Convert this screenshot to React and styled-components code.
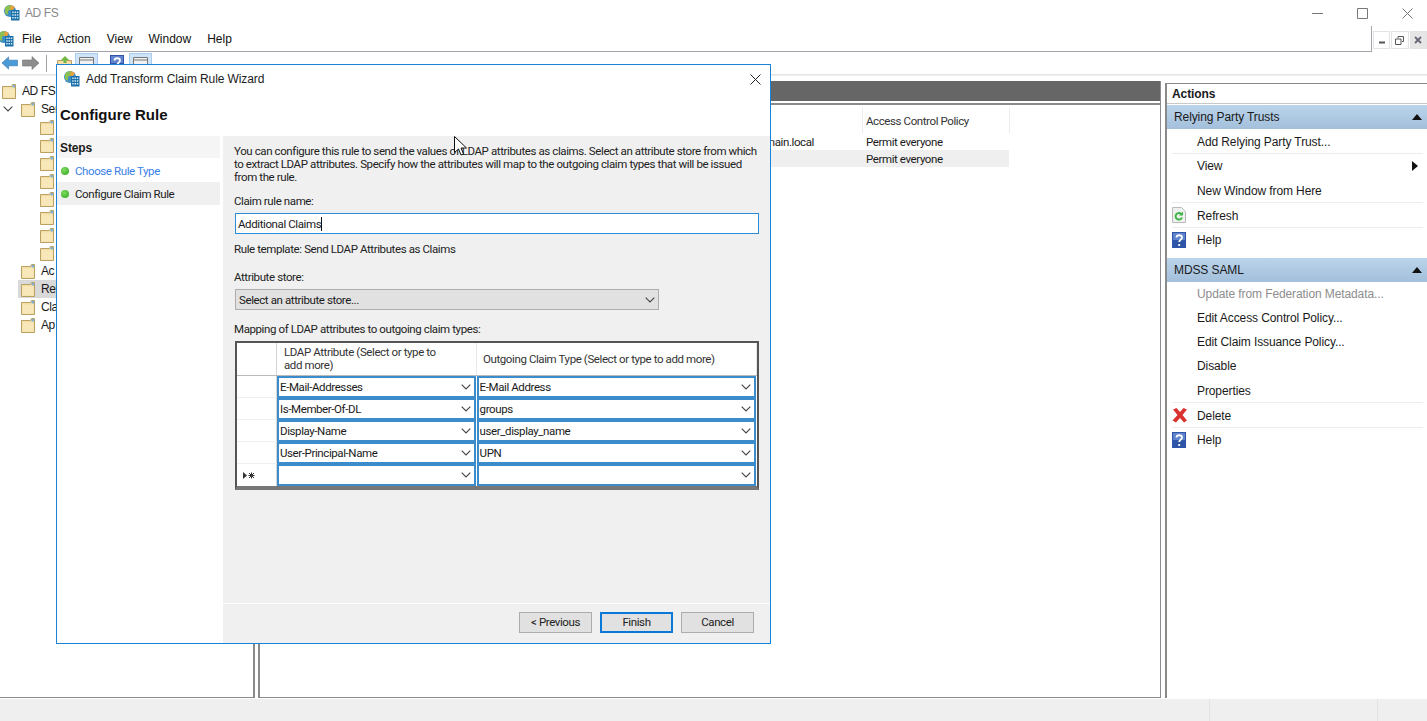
import React from "react";
import styled, { createGlobalStyle } from "styled-components";

const Global = createGlobalStyle`
  html, body { margin: 0; padding: 0; background: #fff; }
  body { font-family: "Liberation Sans", Arial, sans-serif; font-size: 12px; color: #1a1a1a; overflow: hidden; }
  * { box-sizing: border-box; }
`;

const Page = styled.div`
  position: relative;
  width: 1427px;
  height: 721px;
  display: flex;
  flex-direction: column;
  overflow: hidden;
  background: #fff;
`;

const TitleBar = styled.div`
  height: 26px;
  display: flex;
  align-items: center;
  padding-left: 4px;
  gap: 5px;
  color: #8a8a8a;
`;
const TitleText = styled.span`
  flex: 1;
  letter-spacing: -0.4px;
`;
const WinControls = styled.div`
  display: flex;
  align-items: center;
  gap: 28px;
  padding-right: 14px;
`;

const MenuRow = styled.div`
  height: 26px;
  display: flex;
`;
const MenuBar = styled.div`
  flex: 1;
  display: flex;
  align-items: center;
  gap: 16px;
  border-bottom: 1px solid #a5a5ad;
  border-right: 1px solid #a5a5ad;
  font-size: 12px;
  color: #111;
`;
const MenuIcon = styled.span`
  display: flex;
  margin-left: -2px;
  margin-right: -8px;
`;
const MdiButtons = styled.div`
  width: 55px;
  display: flex;
  gap: 1px;
  padding: 5px 0 0 1px;
`;
const MdiButton = styled.div`
  width: 18px;
  height: 18px;
  display: flex;
  align-items: center;
  justify-content: center;
  background: ${(p) => (p.$dim ? "#e6e6e6" : "#fff")};
  border: 1px solid #e3e3e3;
`;

const ToolBar = styled.div`
  height: 23px;
  display: flex;
  align-items: center;
  padding-left: 1px;
  border-bottom: 1px solid #e4e4e4;
`;
const ToolItem = styled.div`
  width: ${(p) => p.$w || 22}px;
  height: 21px;
  display: flex;
  align-items: center;
  justify-content: center;
  margin-right: ${(p) => p.$gap || 0}px;
  background: ${(p) => (p.$on ? "#cfe4f7" : "transparent")};
  border: 1px solid ${(p) => (p.$on ? "#a8cdee" : "transparent")};
`;
const ToolSep = styled.div`
  width: 1px;
  height: 17px;
  background: #a0a0a0;
  margin: 0 8px 0 4px;
`;

const Main = styled.div`
  flex: 1;
  display: flex;
  padding-top: 5px;
  background: #fff;
  border-top: 1px solid #efefef;
  min-height: 0;
`;
const TreePanel = styled.div`
  width: 255px;
  border-right: 2px solid #8a8a8a;
  border-bottom: 1px solid #8a8a90;
  padding-top: 1px;
`;
const TreeRow = styled.div`
  height: 18px;
  display: flex;
  align-items: center;
  gap: 6px;
  padding-left: ${(p) => p.$indent}px;
`;
const TreeLabel = styled.span`
  line-height: 18px;
  letter-spacing: -0.4px;
`;
const Twisty = styled.span`
  width: 10px;
  margin-left: -18px;
  margin-right: 2px;
  display: flex;
`;
const SelBand = styled.div`
  height: 18px;
  display: flex;
  align-items: center;
  gap: 6px;
  margin-left: 18px;
  padding-left: 3px;
  background: #d9d9d9;
`;

const Center = styled.div`
  width: 903px;
  margin-left: 3px;
  border-left: 2px solid #8a8a8a;
  border-right: 1px solid #8a8a90;
  border-bottom: 1px solid #8a8a90;
  display: flex;
  flex-direction: column;
  font-family: Roboto, Arial, sans-serif;
  font-size: 11.5px;
  letter-spacing: -0.4px;
`;
const DarkHead = styled.div`
  height: 22px;
  background: #666;
  border-bottom: 2px solid #fff;
  box-shadow: 0 2px 0 #8a8a8a;
  flex-shrink: 0;
`;
const ColHead = styled.div`
  margin-top: 5px;
  height: 25px;
  display: flex;
  align-items: center;
  color: #333;
`;
const HeadSpacer = styled.div`width: 602px;`;
const HeadCell = styled.div`
  width: 148px;
  height: 100%;
  display: flex;
  align-items: center;
  padding-left: 3px;
  border-left: 1px solid #ececec;
  border-right: 1px solid #ececec;
`;
const DataRow = styled.div`
  height: 17px;
  width: 749px;
  display: flex;
  align-items: center;
  background: ${(p) => (p.$alt ? "#efefef" : "transparent")};
`;
const DataFirst = styled.div`
  width: 554px;
  text-align: right;
`;
const DataCell = styled.div`
  margin-left: 52px;
`;

const ActionsPanel = styled.div`
  width: 262px;
  margin-left: 4px;
  margin-top: 2px;
  border-left: 2px solid #8a8a8a;
  border-top: 1px solid #8a8a8a;
  display: flex;
  flex-direction: column;
  letter-spacing: -0.1px;
`;
const ActionsTitle = styled.div`
  height: 20px;
  display: flex;
  align-items: center;
  padding-left: 5px;
  font-weight: bold;
  border-bottom: 1px solid #c8c8c8;
  margin-bottom: 1px;
`;
const ActionGroupHead = styled.div`
  height: 24px;
  display: flex;
  align-items: center;
  justify-content: space-between;
  padding: 0 5px 0 7px;
  background: linear-gradient(#bad4ea, #a3bfdb);
`;
const ActionList = styled.div`
  padding: 0 0 6px 5px;
`;
const ActionRow = styled.div`
  height: ${(p) => (p.$tall ? 25 : 24)}px;
  display: flex;
  align-items: center;
  justify-content: space-between;
  padding: 1px 5px 0 25px;
  position: relative;
  border-bottom: 1px solid ${(p) => (p.$sep ? "#ececec" : "transparent")};
  margin-right: 4px;
  color: ${(p) => (p.$off ? "#8d8d8d" : "#1a1a1a")};
`;
const ActionIcon = styled.span`
  position: absolute;
  left: 0;
  top: 4px;
  display: flex;
`;

const StatusBar = styled.div`
  height: 23px;
  flex-shrink: 0;
  background: #efefef;
  border-top: 1px solid #fff;
  display: flex;
  justify-content: flex-end;
`;
const StatusCell = styled.div`
  width: ${(p) => p.$w}px;
  border-left: 1px solid #e2e2e2;
`;

/* floating wizard window */
const Wizard = styled.div`
  position: absolute;
  left: 56px;
  top: 64px;
  width: 715px;
  height: 580px;
  background: #fff;
  border: 1px solid #1883d7;
  display: flex;
  flex-direction: column;
  font-family: Roboto, Arial, sans-serif;
  font-size: 11.5px;
  letter-spacing: -0.4px;
`;
const WizTitle = styled.div`
  height: 28px;
  display: flex;
  align-items: center;
  gap: 6px;
  padding: 0 9px 0 7px;
  flex-shrink: 0;
`;
const WizTitleText = styled.span`
  flex: 1;
  color: #222;
  font-family: "Liberation Sans", Arial, sans-serif;
  font-size: 12px;
  letter-spacing: -0.1px;
`;
const WizHeader = styled.div`
  height: 43px;
  flex-shrink: 0;
  padding: 13px 0 0 3px;
  font-family: "Liberation Sans", Arial, sans-serif;
  font-size: 15px;
  font-weight: bold;
  letter-spacing: 0;
  color: #111;
`;
const WizBody = styled.div`
  flex: 1;
  display: flex;
  min-height: 0;
`;
const StepsPane = styled.div`
  width: 163px;
  flex-shrink: 0;
  margin-right: 3px;
`;
const StepsHead = styled.div`
  height: 22px;
  display: flex;
  align-items: center;
  padding: 2px 0 0 3px;
  font-family: "Liberation Sans", Arial, sans-serif;
  font-size: 12px;
  font-weight: bold;
  letter-spacing: -0.1px;
  background: #f5f5f5;
  margin-bottom: 1px;
`;
const Step = styled.div`
  height: 23px;
  display: flex;
  align-items: center;
  gap: 6px;
  padding-left: 4px;
  color: ${(p) => (p.$done ? "#3a7fe8" : "#222")};
  background: ${(p) => (p.$active ? "#f0f0f0" : "transparent")};
`;
const Dot = styled.span`
  width: 8px;
  height: 8px;
  border-radius: 50%;
  background: radial-gradient(circle at 40% 35%, #7fdc5e, #2fa51f);
`;
const ContentPane = styled.div`
  flex: 1;
  display: flex;
  flex-direction: column;
  background: #f0f0f0;
`;
const FormArea = styled.div`
  flex: 1;
  padding: 7px 11px 0 11px;
`;
const Intro = styled.p`
  margin: 2px 0 10px;
  line-height: 13px;
  color: #222;
  white-space: nowrap;
`;
const FieldLabel = styled.div`
  line-height: 14px;
  color: #222;
  margin-bottom: ${(p) => p.$mb || 5}px;
`;
const NameInput = styled.div`
  height: 21px;
  width: 524px;
  margin-left: 1px;
  background: #fff;
  border: 1px solid #2c8ad6;
  display: flex;
  align-items: center;
  padding-left: 2px;
  margin-bottom: 8px;
`;
const Caret = styled.span`
  width: 1px;
  height: 14px;
  background: #111;
`;
const StoreSelect = styled.div`
  width: 424px;
  height: 21px;
  margin-left: 1px;
  background: #e1e1e1;
  border: 1px solid #adadad;
  display: flex;
  align-items: center;
  padding: 0 3px 0 3px;
  margin-bottom: 12px;
`;
const Grid = styled.div`
  width: 524px;
  margin-left: 1px;
  border: 2px solid #555;
  border-bottom: 4px solid #777;
  background: #fff;
  margin-top: 5px;
`;
const GridHead = styled.div`
  display: flex;
  height: 33px;
  border-bottom: 1px solid #bbb;
`;
const RowHeader = styled.div`
  width: 40px;
  flex-shrink: 0;
  border-right: 1px solid #d5d5d5;
  display: flex;
  align-items: center;
  padding-left: 6px;
`;
const HeadText = styled.div`
  width: ${(p) => p.$w}px;
  padding-left: ${(p) => p.$pl}px;
  display: flex;
  align-items: center;
  line-height: 13px;
  border-right: 1px solid #e8e8e8;
  color: #333;
`;
const GridRow = styled.div`
  display: flex;
  height: 22px;
  border-bottom: ${(p) => (p.$last ? "none" : "1px solid #efefef")};
`;
const Combo = styled.div`
  width: ${(p) => p.$w}px;
  height: 22px;
  background: #fff;
  border: 2px solid #3c8ccb;
  display: flex;
  align-items: center;
  padding: 0 3px 0 1px;
  margin-right: 1px;
`;
const ChevronSvg = styled.svg`
  margin-left: auto;
  flex-shrink: 0;
`;
const WizFooter = styled.div`
  height: 40px;
  flex-shrink: 0;
  border-top: 1px solid #fff;
  display: flex;
  align-items: center;
  justify-content: flex-end;
  gap: 8px;
  padding: 0 16px 3px 0;
`;
const WizButton = styled.div`
  width: 73px;
  height: 21px;
  display: flex;
  align-items: center;
  justify-content: center;
  background: #e1e1e1;
  border: ${(p) => (p.$def ? "2px solid #0a78d6" : "1px solid #adadad")};
  color: #222;
`;
const CursorWrap = styled.div`
  position: absolute;
  left: 454px;
  top: 136px;
  display: flex;
`;

const AdfsIcon = ({ size = 16 }) => (
  <svg width={size} height={size} viewBox="0 0 16 16">
    <circle cx="6" cy="6" r="6" fill="#3d8fc4" />
    <path d="M1 3 C3 0 6 0 7 0 L7 4 L4 6 L4 10 L1 8 Z" fill="#8cc152" />
    <path d="M7 0 L11 2 L9 5 L6 5 Z" fill="#e9a13b" />
    <rect x="7" y="5" width="8.500" height="10.500" fill="#1b6fa8" />
    <path d="M8.200 6.500h1.500v1.500H8.200zM10.500 6.500h1.500v1.500h-1.500zM12.800 6.500h1.500v1.500h-1.500zM8.200 9.200h1.500v1.500H8.200zM10.500 9.200h1.500v1.500h-1.500zM12.800 9.200h1.500v1.500h-1.500zM8.200 11.900h1.500v1.500H8.200zM10.500 11.900h1.500v1.500h-1.500zM12.800 11.900h1.500v1.500h-1.500z" fill="#cfe6f5" />
  </svg>
);

const Folder = () => (
  <svg width="14" height="15" viewBox="0 0 14 15">
    <path d="M.5 2.500h9l1-2h3v14H.5z" fill="#f5dfa6" stroke="#b9a063" />
    <path d="M1.500 4.500h11v9h-11z" fill="#f8e7b8" />
    <path d="M10.500 1h2.500v2.500h-2.500z" fill="#7fb0d8" />
  </svg>
);

const UpFolder = () => (
  <svg width="16" height="15" viewBox="0 0 16 15">
    <path d="M.5 4.500h14v10H.5z" fill="#f5dfa6" stroke="#b9a063" />
    <path d="M8 0l4 4H9.500v3h-3V4H4z" fill="#6dbb45" />
  </svg>
);

const Chevron = () => (
  <ChevronSvg width="10" height="6" viewBox="0 0 10 6">
    <path d="M.7.700 5 5 9.300.700" fill="none" stroke="#444" strokeWidth="1.100" />
  </ChevronSvg>
);

const UpTriangle = () => (
  <svg width="10" height="6" viewBox="0 0 10 6"><path d="M0 6 5 0l5 6z" fill="#111" /></svg>
);

const HelpIcon = () => (
  <svg width="14" height="16" viewBox="0 0 14 16">
    <rect width="14" height="16" fill="#2f55a8" />
    <rect x="1" y="1" width="12" height="7" fill="#5f83cd" />
    <path d="M4.500 5.500C4.500 2.500 10 2.500 10 5.500 10 7.800 7.200 7.800 7.200 10M7.200 12v2" fill="none" stroke="#fff" strokeWidth="1.800" />
  </svg>
);

const RefreshIcon = () => (
  <svg width="14" height="16" viewBox="0 0 14 16">
    <path d="M.5.500h9l4 4v11H.5z" fill="#eef1ee" stroke="#b8b8b8" />
    <path d="M10 10.500a3.300 3.300 0 1 1-.6-3.400" fill="none" stroke="#3fb548" strokeWidth="2" />
    <path d="M11 4.500v4H7z" fill="#3fb548" />
  </svg>
);

const DeleteIcon = () => (
  <svg width="16" height="16" viewBox="0 0 16 16">
    <path d="M1 2.500 4.500 1 8 5l3.500-4L15 2.500 10.500 8l4.500 5.500-3 2L8 11l-4 4.500-3.500-2L5.500 8z" fill="#d8332e" />
  </svg>
);

const treeItems = [
  { t: "AD FS", indent: 2 },
  { t: "Ser", indent: 21, twisty: true },
  ...Array.from({ length: 8 }, () => ({ t: "", indent: 40 })),
  { t: "Ac", indent: 21 },
  { t: "Rel", indent: 21, sel: true },
  { t: "Cla", indent: 21 },
  { t: "Ap", indent: 21 },
];

const rules = [
  ["E-Mail-Addresses", "E-Mail Address"],
  ["Is-Member-Of-DL", "groups"],
  ["Display-Name", "user_display_name"],
  ["User-Principal-Name", "UPN"],
  ["", ""],
];

function ActionGroup({ title, items }) {
  return (
    <>
      <ActionGroupHead>
        {title}
        <UpTriangle />
      </ActionGroupHead>
      <ActionList>
        {items.map((it) => (
          <ActionRow key={it.t} $sep={it.sep} $off={it.off} $tall={it.sep}>
            {it.icon && <ActionIcon>{it.icon}</ActionIcon>}
            {it.t}
            {it.arrow && (
              <svg width="6" height="10" viewBox="0 0 6 10"><path d="M0 0l6 5-6 5z" fill="#111" /></svg>
            )}
          </ActionRow>
        ))}
      </ActionList>
    </>
  );
}

export default function App() {
  return (
    <Page>
      <Global />
      <TitleBar>
        <AdfsIcon />
        <TitleText>AD FS</TitleText>
        <WinControls>
          <svg width="11" height="11" viewBox="0 0 11 11"><path d="M0 5.500h11" stroke="#777" /></svg>
          <svg width="23" height="11" viewBox="0 0 23 11"><path d="M6.500.5h10v10h-10z" fill="none" stroke="#777" /></svg>
          <svg width="11" height="11" viewBox="0 0 11 11"><path d="M.5.500l10 10M10.500.5l-10 10" stroke="#777" /></svg>
        </WinControls>
      </TitleBar>
      <MenuRow>
        <MenuBar>
          <MenuIcon><AdfsIcon /></MenuIcon>
          <span>File</span>
          <span>Action</span>
          <span>View</span>
          <span>Window</span>
          <span>Help</span>
        </MenuBar>
        <MdiButtons>
          <MdiButton>
            <svg width="8" height="8" viewBox="0 0 8 8"><path d="M1 6.500h6" stroke="#555" strokeWidth="2" /></svg>
          </MdiButton>
          <MdiButton>
            <svg width="9" height="9" viewBox="0 0 9 9"><path d="M3 2V.5h5.500v5H7M.5 3H6v5.500H.5z" fill="none" stroke="#555" /></svg>
          </MdiButton>
          <MdiButton $dim>
            <svg width="8" height="8" viewBox="0 0 8 8"><path d="M1 1l6 6M7 1 1 7" stroke="#667" strokeWidth="1.800" /></svg>
          </MdiButton>
        </MdiButtons>
      </MenuRow>
      <ToolBar>
        <ToolItem $w={18}>
          <svg width="17" height="14" viewBox="0 0 17 14"><path d="M0 7l7-6.500V4h9.500v6H7v3.500z" fill="#4a9ad8" stroke="#2a6ea8" strokeWidth=".6" /></svg>
        </ToolItem>
        <ToolItem $w={23}>
          <svg width="17" height="14" viewBox="0 0 17 14"><path d="M17 7 10 .5V4H.5v6H10v3.500z" fill="#8e8e8e" stroke="#777" strokeWidth=".6" /></svg>
        </ToolItem>
        <ToolSep />
        <ToolItem $w={20}><UpFolder /></ToolItem>
        <ToolItem $w={23} $on $gap={10}>
          <svg width="15" height="12" viewBox="0 0 15 12"><path d="M.5.500h14v11H.5z" fill="#f2f2f2" stroke="#777" /><path d="M1 3h13" stroke="#777" /></svg>
        </ToolItem>
        <ToolItem $w={18} $gap={3}><HelpIcon /></ToolItem>
        <ToolItem $w={23} $on>
          <svg width="15" height="12" viewBox="0 0 15 12"><path d="M.5.500h14v11H.5z" fill="#f2f2f2" stroke="#777" /><path d="M1 3h13" stroke="#777" /></svg>
        </ToolItem>
      </ToolBar>
      <Main>
        <TreePanel>
          {treeItems.map((it, i) =>
            it.sel ? (
              <SelBand key={i}>
                <Folder />
                <TreeLabel>{it.t}</TreeLabel>
              </SelBand>
            ) : (
              <TreeRow key={i} $indent={it.indent}>
                {it.twisty && (
                  <Twisty>
                    <Chevron />
                  </Twisty>
                )}
                <Folder />
                {it.t && <TreeLabel>{it.t}</TreeLabel>}
              </TreeRow>
            )
          )}
        </TreePanel>
        <Center>
          <DarkHead />
          <ColHead>
            <HeadSpacer />
            <HeadCell>Access Control Policy</HeadCell>
          </ColHead>
          <DataRow>
            <DataFirst>main.local</DataFirst>
            <DataCell>Permit everyone</DataCell>
          </DataRow>
          <DataRow $alt>
            <DataFirst />
            <DataCell>Permit everyone</DataCell>
          </DataRow>
        </Center>
        <ActionsPanel>
          <ActionsTitle>Actions</ActionsTitle>
          <ActionGroup
            title="Relying Party Trusts"
            items={[
              { t: "Add Relying Party Trust...", sep: true },
              { t: "View", arrow: true },
              { t: "New Window from Here", sep: true },
              { t: "Refresh", icon: <RefreshIcon />, sep: true },
              { t: "Help", icon: <HelpIcon /> },
            ]}
          />
          <ActionGroup
            title="MDSS SAML"
            items={[
              { t: "Update from Federation Metadata...", off: true },
              { t: "Edit Access Control Policy..." },
              { t: "Edit Claim Issuance Policy..." },
              { t: "Disable" },
              { t: "Properties", sep: true },
              { t: "Delete", icon: <DeleteIcon />, sep: true },
              { t: "Help", icon: <HelpIcon /> },
            ]}
          />
        </ActionsPanel>
      </Main>
      <StatusBar>
        <StatusCell $w={168} />
        <StatusCell $w={50} />
      </StatusBar>

      <Wizard>
        <WizTitle>
          <AdfsIcon />
          <WizTitleText>Add Transform Claim Rule Wizard</WizTitleText>
          <svg width="11" height="11" viewBox="0 0 11 11"><path d="M.5.500l10 10M10.500.5l-10 10" stroke="#222" /></svg>
        </WizTitle>
        <WizHeader>Configure Rule</WizHeader>
        <WizBody>
          <StepsPane>
            <StepsHead>Steps</StepsHead>
            <Step $done><Dot />Choose Rule Type</Step>
            <Step $active><Dot />Configure Claim Rule</Step>
          </StepsPane>
          <ContentPane>
            <FormArea>
              <Intro>
                You can configure this rule to send the values of LDAP attributes as claims. Select an attribute store from which
                <br />
                to extract LDAP attributes. Specify how the attributes will map to the outgoing claim types that will be issued
                <br />
                from the rule.
              </Intro>
              <FieldLabel>Claim rule name:</FieldLabel>
              <NameInput>Additional Claims<Caret /></NameInput>
              <FieldLabel $mb={14}>Rule template: Send LDAP Attributes as Claims</FieldLabel>
              <FieldLabel>Attribute store:</FieldLabel>
              <StoreSelect>
                Select an attribute store...
                <Chevron />
              </StoreSelect>
              <FieldLabel $mb={0}>Mapping of LDAP attributes to outgoing claim types:</FieldLabel>
              <Grid>
                <GridHead>
                  <RowHeader />
                  <HeadText $w={200} $pl={7}>LDAP Attribute (Select or type to<br />add more)</HeadText>
                  <HeadText $w={280} $pl={6}>Outgoing Claim Type (Select or type to add more)</HeadText>
                </GridHead>
                {rules.map((r, i) => (
                  <GridRow key={i} $last={i === rules.length - 1}>
                    <RowHeader>
                      {i === rules.length - 1 && (
                        <svg width="13" height="7" viewBox="0 0 13 7">
                          <path d="M0 0l4 3.500L0 7z" fill="#333" />
                          <path d="M6 1l5 5M11 1 6 6M5.500 3.500h6M8.500.5v6" stroke="#333" />
                        </svg>
                      )}
                    </RowHeader>
                    <Combo $w={199}>{r[0]}<Chevron /></Combo>
                    <Combo $w={280}>{r[1]}<Chevron /></Combo>
                  </GridRow>
                ))}
              </Grid>
            </FormArea>
            <WizFooter>
              <WizButton>&lt; Previous</WizButton>
              <WizButton $def>Finish</WizButton>
              <WizButton>Cancel</WizButton>
            </WizFooter>
          </ContentPane>
        </WizBody>
      </Wizard>
      <CursorWrap>
        <svg width="14" height="20" viewBox="0 0 14 20">
          <path d="M.5.500v16l4-3.500 2.500 6 2.500-1-2.500-6h5.500z" fill="#fff" stroke="#111" />
        </svg>
      </CursorWrap>
    </Page>
  );
}
